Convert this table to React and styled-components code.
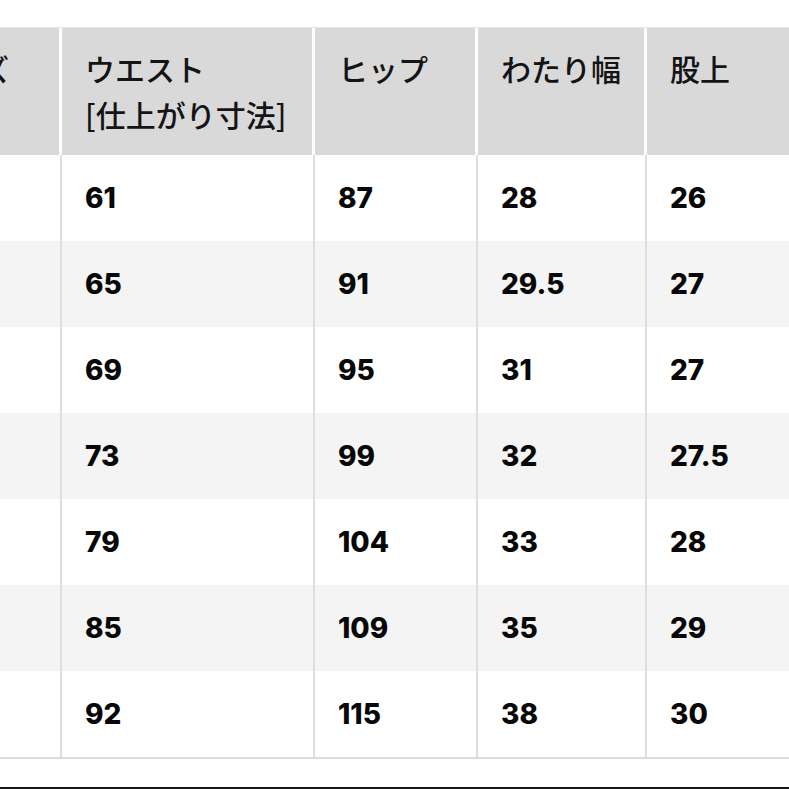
import React from "react";
import styled, { createGlobalStyle } from "styled-components";

const Global = createGlobalStyle`
  html, body { margin: 0; padding: 0; background: #ffffff; }
  body { width: 789px; height: 789px; overflow: hidden; }
`;

const Page = styled.div`
  width: 789px;
  height: 789px;
  overflow: hidden;
  padding-top: 27px;
  box-sizing: border-box;
  display: flex;
  flex-direction: column;
`;

const Table = styled.table`
  margin-left: -103px;
  border-collapse: separate;
  border-spacing: 0;
  table-layout: fixed;
  width: 923px;
  border-top: 1px solid #e6e6e6;
  border-bottom: 2px solid #dcdcdc;
`;

const HeadCell = styled.th`
  background: #d9d9d9;
  border-right: 3px solid #ffffff;
  height: 127px;
  box-sizing: border-box;
  padding: 17px 0 0 23px;
  vertical-align: top;
  text-align: left;
  font-family: "Noto Sans CJK JP", "Noto Sans", sans-serif;
  font-weight: 500;
  font-size: 30px;
  line-height: 46px;
  color: #141414;
  white-space: nowrap;
`;

const Row = styled.tr`
  background: ${(p) => (p.$striped ? "#f4f4f4" : "#ffffff")};
`;

const Cell = styled.td`
  height: 86px;
  box-sizing: border-box;
  border-right: 2px solid #dedede;
  padding: 0 0 0 23px;
  vertical-align: middle;
  font-family: Inter, "Noto Sans", sans-serif;
  font-weight: 800;
  font-size: 28px;
  color: #080808;
  white-space: nowrap;
`;

const FootLine = styled.div`
  margin-top: 28px;
  height: 2px;
  background: #161616;
`;

const widths = [165, 253, 163, 169, 173];

const headers = [
  ["サイズ"],
  ["ウエスト", "[仕上がり寸法]"],
  ["ヒップ"],
  ["わたり幅"],
  ["股上"],
];

const rows = [
  ["", "61", "87", "28", "26"],
  ["", "65", "91", "29.5", "27"],
  ["", "69", "95", "31", "27"],
  ["", "73", "99", "32", "27.5"],
  ["", "79", "104", "33", "28"],
  ["", "85", "109", "35", "29"],
  ["", "92", "115", "38", "30"],
];

export default function App() {
  return (
    <>
      <Global />
      <Page>
        <Table>
          <colgroup>
            {widths.map((w, i) => (
              <col key={i} style={{ width: w }} />
            ))}
          </colgroup>
          <thead>
            <tr>
              {headers.map((lines, i) => (
                <HeadCell key={i}>
                  {lines.map((l, j) => (
                    <div key={j}>{l}</div>
                  ))}
                </HeadCell>
              ))}
            </tr>
          </thead>
          <tbody>
            {rows.map((r, i) => (
              <Row key={i} $striped={i % 2 === 1}>
                {r.map((v, j) => (
                  <Cell key={j}>{v}</Cell>
                ))}
              </Row>
            ))}
          </tbody>
        </Table>
        <FootLine />
      </Page>
    </>
  );
}
